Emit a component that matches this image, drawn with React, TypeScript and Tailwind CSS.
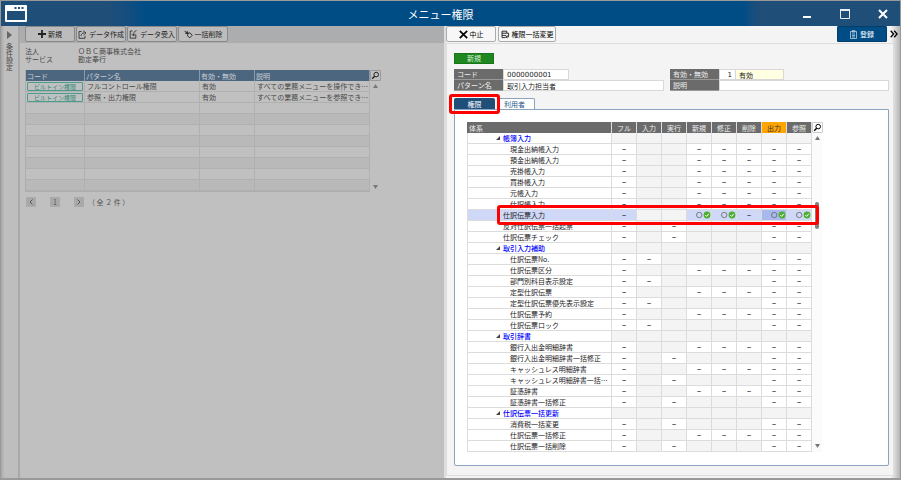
import React from "react";

type RowKind = "group" | "item" | "child";

interface PermissionRow {
    name: string;
    kind: RowKind;
    // columns that can be set, besides フル / 出力 / 参照
    cols?: string;
    selected?: boolean;
}

const COLUMNS = ["フル", "入力", "実行", "新規", "修正", "削除", "出力", "参照"];

const OPEN_COLUMNS: Record<string, number[]> = {
    edit: [0, 3, 4, 5, 6, 7],
    input: [0, 1, 6, 7],
    run: [0, 2, 6, 7],
};

const ROWS: PermissionRow[] = [
    { name: "帳簿入力", kind: "group" },
    { name: "現金出納帳入力", kind: "child", cols: "edit" },
    { name: "預金出納帳入力", kind: "child", cols: "edit" },
    { name: "売掛帳入力", kind: "child", cols: "edit" },
    { name: "買掛帳入力", kind: "child", cols: "edit" },
    { name: "元帳入力", kind: "child", cols: "edit" },
    { name: "仕訳帳入力", kind: "child", cols: "edit" },
    { name: "仕訳伝票入力", kind: "item", cols: "edit", selected: true },
    { name: "反対仕訳伝票一括起票", kind: "item", cols: "run" },
    { name: "仕訳伝票チェック", kind: "item", cols: "run" },
    { name: "取引入力補助", kind: "group" },
    { name: "仕訳伝票No.", kind: "child", cols: "input" },
    { name: "仕訳伝票区分", kind: "child", cols: "edit" },
    { name: "部門別科目表示設定", kind: "child", cols: "input" },
    { name: "定型仕訳伝票", kind: "child", cols: "edit" },
    { name: "定型仕訳伝票優先表示設定", kind: "child", cols: "input" },
    { name: "仕訳伝票予約", kind: "child", cols: "edit" },
    { name: "仕訳伝票ロック", kind: "child", cols: "input" },
    { name: "取引辞書", kind: "group" },
    { name: "銀行入出金明細辞書", kind: "child", cols: "edit" },
    { name: "銀行入出金明細辞書一括修正", kind: "child", cols: "run" },
    { name: "キャッシュレス明細辞書", kind: "child", cols: "edit" },
    { name: "キャッシュレス明細辞書一括…", kind: "child", cols: "run" },
    { name: "証憑辞書", kind: "child", cols: "edit" },
    { name: "証憑辞書一括修正", kind: "child", cols: "run" },
    { name: "仕訳伝票一括更新", kind: "group" },
    { name: "消費税一括変更", kind: "child", cols: "run" },
    { name: "仕訳伝票一括修正", kind: "child", cols: "edit" },
    { name: "仕訳伝票一括削除", kind: "child", cols: "run" },
];

const PATTERNS = [
    { name: "フルコントロール権限", state: "有効", note: "すべての業務メニューを操作でき…" },
    { name: "参照・出力権限", state: "有効", note: "すべての業務メニューを参照でき…" },
];

const SearchIcon: React.FC = () => (
    <svg viewBox="0 0 9 9" className="size-[9px]" fill="none" stroke="currentColor">
        <circle cx="5.2" cy="3.6" r="2.3" strokeWidth="1" />
        <path d="M3.6 5.3 1.2 7.8" strokeWidth="1.4" />
    </svg>
);

const Arrow: React.FC<{ down?: boolean }> = ({ down }) => (
    <svg viewBox="0 0 5 4" className="h-1 w-[5px]" fill="currentColor">
        <path d={down ? "M0 0h5L2.5 4z" : "M0 4h5L2.5 0z"} />
    </svg>
);

const PlusIcon = () => (
    <svg viewBox="0 0 8 8" className="size-2" stroke="currentColor" strokeWidth="1.8">
        <path d="M4 0v8M0 4h8" />
    </svg>
);

const ExportIcon = () => (
    <svg viewBox="0 0 9 9" className="size-[9px]" fill="none" stroke="currentColor" strokeWidth="0.8">
        <path d="M3.6 1.5H1v6.8h6V5.8M3 6c.2-2 1.3-3.2 3.4-3.2M5.2.8 8 2.9 5.6 5" />
    </svg>
);

const ImportIcon = () => (
    <svg viewBox="0 0 9 9" className="size-[9px]" fill="none" stroke="currentColor" strokeWidth="0.8">
        <path d="M3.5 1H1.2v7.2h5.6V4.5M7.5.5C5.5 1 4.6 2.5 4.4 5.5M2.6 3.8l1.8 2 2-1.5" />
    </svg>
);

const BulkDeleteIcon = () => (
    <svg viewBox="0 0 9 9" className="size-[9px]" fill="none" stroke="currentColor" strokeWidth="0.9">
        <path d="M.5 1.2 4 3.4M1.2 3.4 4 3.4 3 .9M4 3.4l2-.6 2.2 2.6-2.4 2.4-2.4-2z" />
    </svg>
);

const BulkEditIcon = () => (
    <svg viewBox="0 0 9 9" className="size-[9px]" fill="none" stroke="currentColor" strokeWidth="0.8">
        <path d="M1 1.2h4.8v2H1zM1 3.2v2.2h4M1 5.4v2.2h3.6M5.8 3.2h1.8v3.4M5 6.8h2.8M6.4 5.4 5 6.8l1.4 1.4" />
    </svg>
);

const CrossIcon = () => (
    <svg viewBox="0 0 9 9" className="size-[9px]" stroke="currentColor" strokeWidth="1.7">
        <path d="M.8.8l7.4 7.4M8.2.8.8 8.2" />
    </svg>
);

const ToolButton: React.FC<{ icon: React.ReactNode; label: string; className: string }> = ({
    icon,
    label,
    className,
}) => (
    <button className={`flex h-4 items-center justify-center gap-0.5 rounded-[2px] border ${className}`}>
        {icon}
        {label}
    </button>
);

const TitleBar = () => (
    <header className="grid h-[25px] grid-cols-[1fr_auto_1fr] items-center bg-linear-to-r from-[#1f4e79] from-12% via-[#004d86] via-16% to-[#004d86] text-white">
        <svg viewBox="0 0 22 17" className="ml-1 h-[17px] w-[22px]">
            <rect width="22" height="17" rx="1" fill="#fff" />
            <rect x="2" y="6" width="18" height="9" fill="#1f4e79" />
            <path d="M9.5 2h2v2h-2zM13 2h2v2h-2zM16.5 2h2v2h-2z" fill="#1f4e79" />
        </svg>
        <h1 className="pr-5 text-[11px] leading-4">メニュー権限</h1>
        <div className="ml-auto flex h-full w-[156px] items-center justify-end gap-7 bg-linear-to-r from-[#004d86] to-[#1f4e79] to-10% pr-3">
            <button aria-label="最小化">
                <svg viewBox="0 0 10 10" className="size-2.5" stroke="#fff" strokeWidth="2">
                    <path d="M1 8h8" />
                </svg>
            </button>
            <button aria-label="最大化">
                <svg viewBox="0 0 10 10" className="size-2.5" fill="none" stroke="#e8eef4">
                    <path d="M.5 1h9v8.5h-9z" />
                    <path d="M0 1h10" strokeWidth="2" />
                </svg>
            </button>
            <button aria-label="閉じる">
                <svg viewBox="0 0 10 10" className="size-2.5" stroke="#fff" strokeWidth="2">
                    <path d="M1 1l8 8M9 1 1 9" />
                </svg>
            </button>
        </div>
    </header>
);

const PatternTable = () => (
    <table className="w-[345px] table-fixed border-separate border-spacing-0 border-b border-l border-[#adadad]">
        <colgroup>
            <col className="w-[59px]" />
            <col className="w-[115px]" />
            <col className="w-[55px]" />
            <col />
        </colgroup>
        <thead>
            <tr className="bg-[#4d6680] text-left text-[#c6ccd2]">
                {["コード", "パターン名", "有効・無効", "説明"].map((label) => (
                    <th key={label} className="h-[11px] border-r border-[#8c9aa8] pl-px font-normal">
                        {label}
                    </th>
                ))}
            </tr>
        </thead>
        <tbody>
            {Array.from({ length: 10 }, (_, i) => {
                const pattern = PATTERNS[i];
                return (
                    <tr key={i} className={`${i > 2 && i % 2 === 1 ? "bg-[#b9b9b9]" : "bg-[#c0c0c0]"} [&>td]:h-[11px] [&>td]:border-r [&>td]:border-b [&>td]:border-[#b0b0b0] [&>td]:whitespace-nowrap`}>
                        <td className="px-px">
                            {pattern && (
                                <button className="block h-[9px] w-full rounded-[1px] border border-[#4a9c8d] text-[6px] leading-[7px] text-[#2f8a7a]">
                                    ビルトイン権限
                                </button>
                            )}
                        </td>
                        <td className="pl-0.5">{pattern?.name}</td>
                        <td className="pl-0.5">{pattern?.state}</td>
                        <td className="pl-0.5">{pattern?.note}</td>
                    </tr>
                );
            })}
        </tbody>
    </table>
);

const LeftPane = () => (
    <section className="flex min-w-0 bg-[#c0c0c0] text-[#484848]">
        <aside className="flex w-[19px] shrink-0 flex-col items-center gap-1 border-r-2 border-[#a8a8a8] bg-linear-to-r from-[#a6a6a6] to-[#bebebe] to-20% pt-[5px]">
            <button aria-label="開く" className="text-[#666]">
                <svg viewBox="0 0 5 8" className="h-2 w-[5px]" fill="currentColor">
                    <path d="M0 0v8l5-4z" />
                </svg>
            </button>
            <span className="text-[7px] leading-[10px] [writing-mode:vertical-rl]">条件設定</span>
        </aside>
        <div className="min-w-0 flex-1">
            <div className="flex h-[17px] gap-px bg-[#acadaf] pl-[5px]">
                <ToolButton icon={<PlusIcon />} label="新規" className="w-[50px] border-[#888] bg-[#bcbcbc] text-[#222]" />
                <ToolButton icon={<ExportIcon />} label="データ作成" className="w-[50px] border-[#888] bg-[#bcbcbc] text-[#222]" />
                <ToolButton icon={<ImportIcon />} label="データ受入" className="w-[50px] border-[#888] bg-[#bcbcbc] text-[#222]" />
                <ToolButton icon={<BulkDeleteIcon />} label="一括削除" className="w-[50px] border-[#888] bg-[#bcbcbc] text-[#222]" />
            </div>
            <dl className="grid grid-cols-[53px_1fr] pt-1 pl-[5px] leading-2">
                <dt>法人</dt>
                <dd>ＯＢＣ商事株式会社</dd>
                <dt>サービス</dt>
                <dd>勘定奉行</dd>
            </dl>
            <div className="mt-[7px] flex pl-[5px]">
                <PatternTable />
                <div className="flex flex-col items-center justify-between pb-[3px] text-[#777]">
                    <div className="flex flex-col items-center gap-[3px]">
                        <button aria-label="検索" className="rounded-[1px] border border-[#999] text-[#222]">
                            <SearchIcon />
                        </button>
                        <Arrow />
                    </div>
                    <Arrow down />
                </div>
            </div>
            <nav className="flex items-center pt-[5px] pl-[6px] text-[#555]">
                <button aria-label="前へ" className="flex h-2.5 w-2.5 items-center justify-center rounded-[1px] bg-[#a9a9a9]">
                    <svg viewBox="0 0 4 6" className="h-1.5 w-1" fill="none" stroke="currentColor">
                        <path d="M3.5.5 1 3l2.5 2.5" />
                    </svg>
                </button>
                <button className="ml-3.5 h-2.5 w-2.5 rounded-[1px] bg-[#a9a9a9] leading-[10px]">1</button>
                <button aria-label="次へ" className="ml-3.5 flex h-2.5 w-2.5 items-center justify-center rounded-[1px] bg-[#a9a9a9]">
                    <svg viewBox="0 0 4 6" className="h-1.5 w-1" fill="none" stroke="currentColor">
                        <path d="M.5.5 3 3 .5 5.5" />
                    </svg>
                </button>
                <span className="ml-1">（ 全 ２ 件 ）</span>
            </nav>
        </div>
    </section>
);

const FORM_LABEL = "h-[11px] border-b border-[#999] bg-[#6b6b6b] pl-[3px] text-[#eee]";
const FORM_INPUT = "h-[11px] min-w-0 border border-[#d8d8d8] bg-white px-[3px] text-[#222] outline-none";

const PatternForm = () => (
    <form className="mt-[5px] grid grid-cols-[210px_1fr] gap-x-[6px]">
        <div className="grid grid-cols-[49px_1fr]">
            <label htmlFor="code" className={FORM_LABEL}>
                コード
            </label>
            <input id="code" defaultValue="0000000001" className={`${FORM_INPUT} w-[66px] font-['DejaVu_Sans']`} />
            <label htmlFor="name" className={FORM_LABEL}>
                パターン名
            </label>
            <input id="name" defaultValue="取引入力担当者" className={FORM_INPUT} />
        </div>
        <div className="grid grid-cols-[49px_1fr]">
            <label htmlFor="state" className={FORM_LABEL}>
                有効・無効
            </label>
            <div className="flex">
                <input id="state" defaultValue="1" className={`${FORM_INPUT} w-[17px] text-right font-['DejaVu_Sans']`} />
                <input aria-label="状態" readOnly value="有効" className="h-[11px] w-12 border border-l-0 border-[#d8d8d8] bg-[#ffffe1] px-[3px] text-[#222] outline-none" />
            </div>
            <label htmlFor="note" className={FORM_LABEL}>
                説明
            </label>
            <input id="note" className={FORM_INPUT} />
        </div>
    </form>
);

const AllowedMark = () => (
    <svg viewBox="0 0 15 8" className="ml-auto h-2 w-[15px]" fill="none">
        <circle cx="3.2" cy="4" r="2.7" stroke="#666" strokeWidth="0.8" />
        <circle cx="11" cy="4" r="3.4" fill="#4caf2f" />
        <path d="M9.3 4.1l1.3 1.3 2.2-2.6" stroke="#fff" strokeWidth="1" />
    </svg>
);

const cellColor = (row: PermissionRow, col: number, open: boolean) => {
    if (!open) return "bg-[#f4f4f4]";
    if (!row.selected) return "bg-white";
    return col === 6 ? "bg-[#a9b9ee]" : "bg-[#cfd8f7]";
};

const PermissionTableRow: React.FC<{ row: PermissionRow }> = ({ row }) => (
    <tr className="relative">
        <td
            className={`h-[11px] border-r border-b border-l border-[#dcdcdc] whitespace-nowrap ${
                row.selected ? "bg-[#cfd8f7]" : "bg-white"
            } ${row.kind === "child" ? "pl-[42px]" : row.kind === "item" ? "pl-[35px]" : "pl-7"}`}
        >
            {row.kind === "group" ? (
                <span className="flex items-center gap-[3px] font-medium text-[#0000ff]">
                    <svg viewBox="0 0 4 4" className="size-1" fill="#444">
                        <path d="M4 0v4H0z" />
                    </svg>
                    {row.name}
                </span>
            ) : (
                row.name
            )}
            {row.selected && (
                <span className="pointer-events-none absolute -top-[5px] -right-[7px] -bottom-1 left-[30px] z-10 rounded-[3px] border-3 border-[#ff0000]" />
            )}
        </td>
        {COLUMNS.map((label, col) => {
            const open = row.cols ? OPEN_COLUMNS[row.cols].includes(col) : false;
            const allowed = row.selected && [3, 4, 6, 7].includes(col);
            return (
                <td
                    key={label}
                    className={`h-[11px] border-r border-b border-[#dcdcdc] text-center font-bold text-[#444] ${cellColor(row, col, open)}`}
                >
                    {open && (allowed ? <AllowedMark /> : "−")}
                </td>
            );
        })}
    </tr>
);

const PermissionTable = () => (
    <table className="w-[345px] table-fixed border-separate border-spacing-0">
        <colgroup>
            <col className="w-[145px]" />
            {COLUMNS.map((label) => (
                <col key={label} className="w-[25px]" />
            ))}
        </colgroup>
        <thead>
            <tr className="text-[#f0f0f0]">
                <th className="h-[11px] border-r border-[#ddd] bg-[#6b6b6b] pl-0.5 text-left font-normal">体系</th>
                {COLUMNS.map((label) => (
                    <th
                        key={label}
                        className={`h-[11px] border-r border-[#ddd] font-normal ${
                            label === "出力" ? "bg-[#ffa500] text-[#333]" : "bg-[#6b6b6b]"
                        }`}
                    >
                        {label}
                    </th>
                ))}
            </tr>
        </thead>
        <tbody>
            {ROWS.map((row) => (
                <PermissionTableRow key={row.name} row={row} />
            ))}
        </tbody>
    </table>
);

const Tabs = () => (
    <div role="tablist" className="mt-[7px] flex gap-[3px]">
        <button role="tab" aria-selected="true" className="relative h-[11px] w-[41px] rounded-t-[2px] bg-[#1f4e79] text-white">
            権限
            <span className="pointer-events-none absolute -inset-x-[5px] -top-1 -bottom-[5px] z-10 rounded-[3px] border-3 border-[#ff0000]" />
        </button>
        <button role="tab" aria-selected="false" className="h-[11px] w-[37px] rounded-t-[2px] border border-b-0 border-[#8aa4c0] bg-white pr-1 leading-[9px] text-[#1f5a8a]">
            利用者
        </button>
    </div>
);

const RightPane = () => (
    <section className="flex min-w-0 flex-col border-l-2 border-[#dedede] bg-linear-to-l from-[#b4b4b4] to-[#f4f4f4] to-2% pr-[6px] pb-[2px] text-[#222]">
        <div className="flex h-[17px] items-start gap-0.5">
            <ToolButton icon={<CrossIcon />} label="中止" className="w-[50px] border-[#aaa] bg-[#f7f7f7] text-black" />
            <ToolButton icon={<BulkEditIcon />} label="権限一括変更" className="w-[58px] border-[#aaa] bg-[#f7f7f7] text-black" />
            <button className="ml-auto flex h-4 w-[50px] items-center justify-center gap-[3px] rounded-[1px] border border-[#003e6e] bg-[#004d86] text-white">
                <svg viewBox="0 0 7 9" className="h-[9px] w-[7px]" fill="none" stroke="#b9cfe2" strokeWidth="0.8">
                    <path d="M.5 1.5h6v7h-6zM2.2.5h2.6v1.6H2.2zM2 4h3M2 5.5h3M2 7h3" />
                </svg>
                登録
            </button>
            <button aria-label="その他" className="-mr-1 ml-px flex h-4 items-center">
                <svg viewBox="0 0 8 8" className="size-2" fill="none" stroke="#000" strokeWidth="1.3">
                    <path d="M.7.7 3.6 4 .7 7.3M4.2.7 7.1 4 4.2 7.3" />
                </svg>
            </button>
        </div>
        <div className="flex-1 border border-[#dedede] bg-[#f4f4f4] px-[4px] pt-[9px] pb-[9px] pl-[7px]">
            <div className="h-[11px] w-10 border border-[#197519] bg-[#1f871f] text-center leading-[9px] text-[#d8f0d8]">新規</div>
            <PatternForm />
            <Tabs />
            <div className="flex rounded-b-[2px] border border-[#8aa4c0] bg-white px-3 pt-3 pb-[13px]">
                <PermissionTable />
                <div className="flex w-2.5 flex-col items-center bg-[#fbfbfb] text-[#777]">
                    <button aria-label="検索" className="mb-[3px] rounded-[1px] border border-[#ccc] bg-white text-black">
                        <SearchIcon />
                    </button>
                    <Arrow />
                    <span className="mt-[62px] h-[27px] w-1 rounded-full bg-[#808080]" />
                    <span className="mt-auto mb-1">
                        <Arrow down />
                    </span>
                </div>
            </div>
        </div>
    </section>
);

const App: React.FC = () => {
    return (
        <div
            lang="ja"
            className="flex min-h-screen flex-col border border-b-2 border-[#999] bg-[#c0c0c0] font-['Noto_Sans_CJK_JP',sans-serif] text-[7px] leading-[10px]"
        >
            <TitleBar />
            <main className="grid flex-1 grid-cols-[443fr_456fr]">
                <LeftPane />
                <RightPane />
            </main>
        </div>
    );
};

export default App;
